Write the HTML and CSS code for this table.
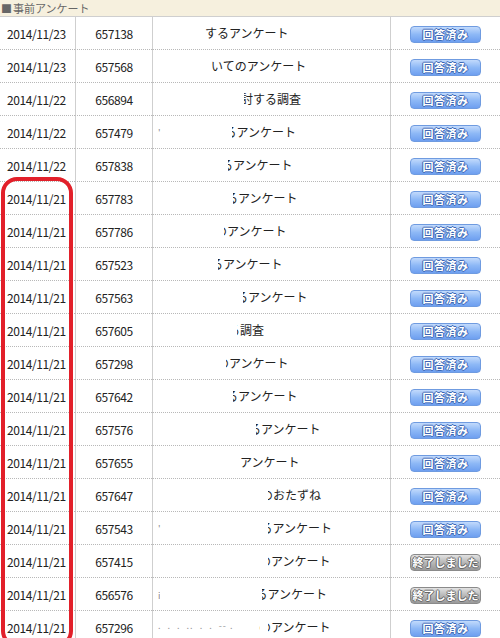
FILE: index.html
```html
<!DOCTYPE html>
<html lang="ja">
<head>
    <meta charset="UTF-8">
    <title>事前アンケート</title>
    <link rel="stylesheet" href="styles.css">
</head>
<body>

    <!-- 見出し -->
    <div class="head"><span class="sq">■</span>事前アンケート</div>

    <div class="list-wrap">
        <table class="list">
            <colgroup>
                <col class="c-date">
                <col class="c-no">
                <col class="c-title">
                <col class="c-btn">
            </colgroup>
            <tr><td class="date">2014/11/23</td><td class="no">657138</td><td class="title"><span class="erase" style="width:47px"></span>するアンケート</td><td class="act"><span class="btn">回答済み</span></td></tr>
            <tr><td class="date">2014/11/23</td><td class="no">657568</td><td class="title"><span class="erase" style="width:53px"></span>いてのアンケート</td><td class="act"><span class="btn">回答済み</span></td></tr>
            <tr><td class="date">2014/11/22</td><td class="no">656894</td><td class="title"><span class="erase over slim" style="width:86px"></span>討する調査</td><td class="act"><span class="btn">回答済み</span></td></tr>
            <tr><td class="date">2014/11/22</td><td class="no">657479</td><td class="title"><span class="speck">'</span><span class="erase over" style="width:71px"></span>るアンケート</td><td class="act"><span class="btn">回答済み</span></td></tr>
            <tr><td class="date">2014/11/22</td><td class="no">657838</td><td class="title"><span class="erase over" style="width:70px"></span>るアンケート</td><td class="act"><span class="btn">回答済み</span></td></tr>
            <tr><td class="date">2014/11/21</td><td class="no">657783</td><td class="title"><span class="erase over" style="width:75px"></span>るアンケート</td><td class="act"><span class="btn">回答済み</span></td></tr>
            <tr><td class="date">2014/11/21</td><td class="no">657786</td><td class="title"><span class="erase over thin" style="width:66px"></span>のアンケート</td><td class="act"><span class="btn">回答済み</span></td></tr>
            <tr><td class="date">2014/11/21</td><td class="no">657523</td><td class="title"><span class="erase over" style="width:60px"></span>るアンケート</td><td class="act"><span class="btn">回答済み</span></td></tr>
            <tr><td class="date">2014/11/21</td><td class="no">657563</td><td class="title"><span class="erase over" style="width:85px"></span>るアンケート</td><td class="act"><span class="btn">回答済み</span></td></tr>
            <tr><td class="date">2014/11/21</td><td class="no">657605</td><td class="title"><span class="erase over thin" style="width:79px"></span>る調査</td><td class="act"><span class="btn">回答済み</span></td></tr>
            <tr><td class="date">2014/11/21</td><td class="no">657298</td><td class="title"><span class="erase over thin" style="width:68px"></span>のアンケート</td><td class="act"><span class="btn">回答済み</span></td></tr>
            <tr><td class="date">2014/11/21</td><td class="no">657642</td><td class="title"><span class="erase over" style="width:75px"></span>るアンケート</td><td class="act"><span class="btn">回答済み</span></td></tr>
            <tr><td class="date">2014/11/21</td><td class="no">657576</td><td class="title"><span class="erase over" style="width:98px"></span>るアンケート</td><td class="act"><span class="btn">回答済み</span></td></tr>
            <tr><td class="date">2014/11/21</td><td class="no">657655</td><td class="title"><span class="erase" style="width:82px"></span>アンケート</td><td class="act"><span class="btn">回答済み</span></td></tr>
            <tr><td class="date">2014/11/21</td><td class="no">657647</td><td class="title"><span class="erase over" style="width:110px"></span>のおたずね</td><td class="act"><span class="btn">回答済み</span></td></tr>
            <tr><td class="date">2014/11/21</td><td class="no">657543</td><td class="title"><span class="speck">'</span><span class="erase over" style="width:107px"></span>るアンケート</td><td class="act"><span class="btn">回答済み</span></td></tr>
            <tr><td class="date">2014/11/21</td><td class="no">657415</td><td class="title"><span class="erase over thin" style="width:110px"></span>のアンケート</td><td class="act"><span class="btn done">終了しました</span></td></tr>
            <tr><td class="date">2014/11/21</td><td class="no">656576</td><td class="title"><span class="speck">i</span><span class="erase over" style="width:102px"></span>るアンケート</td><td class="act"><span class="btn done">終了しました</span></td></tr>
            <tr><td class="date">2014/11/21</td><td class="no">657296</td><td class="title"><span class="speck dots">.&nbsp; .&nbsp; .&nbsp; ..&nbsp; .&nbsp; .&nbsp; --&nbsp;.</span><span class="erase over thin" style="width:8px"></span>のアンケート</td><td class="act"><span class="btn">回答済み</span></td></tr>
        </table>

        <!-- 赤枠の注釈 -->
        <div class="mark"></div>
    </div>

</body>
</html>
```

FILE: styles.css
```css
body {
    margin: 0;
    padding: 0;
    background: #fff;
    font-family: "Noto Sans CJK JP", "Liberation Sans", sans-serif;
    font-size: 12px;
    color: #222;
    overflow: hidden;
}

/* 見出し */
.head {
    height: 16px;
    line-height: 16px;
    background: #f6f0de;
    border-bottom: 1px solid #cfcfcf;
    color: #666;
    font-size: 11px;
    padding-left: 1px;
}

.head .sq {
    color: #666;
    margin-right: 1px;
}

.list-wrap {
    position: relative;
}

/* 一覧 */
.list {
    width: 500px;
    table-layout: fixed;
    border-collapse: separate;
    border-spacing: 0;
}

.c-date { width: 75px; }
.c-no { width: 77px; }
.c-title { width: 238px; }
.c-btn { width: 110px; }

.list td {
    height: 32px;
    padding: 0;
    border-bottom: 1px dotted #b8b8b8;
    white-space: nowrap;
    overflow: hidden;
    vertical-align: middle;
}

.list td + td {
    border-left: 1px solid #cfcfcf;
}

.date {
    padding-left: 7px !important;
    letter-spacing: -0.4px;
}

.no {
    text-align: center;
    letter-spacing: -0.4px;
}

.title {
    padding-left: 5px !important;
}

/* 塗りつぶされた部分（白い塗りが文字の左側に重なる） */
.erase {
    display: inline-block;
    height: 16px;
    background: #fff;
    position: relative;
    z-index: 1;
    vertical-align: middle;
}

.erase.over {
    margin-right: -7px;
}

.erase.over.thin {
    margin-right: -9px;
}

.erase.over.slim {
    margin-right: -3px;
}

.speck {
    color: #888;
    font-size: 9px;
}

.speck.dots {
    display: inline-block;
    width: 102px;
    overflow: hidden;
    letter-spacing: 1px;
    color: #999;
}

.act {
    text-align: center;
}

/* ボタン */
.btn {
    display: inline-block;
    width: 69px;
    height: 15px;
    line-height: 15px;
    border: 1px solid #6f9be0;
    border-radius: 4px;
    background: linear-gradient(#c2dafc, #8db8f6 50%, #6e9ff0);
    color: #fff;
    font-size: 11px;
    font-weight: bold;
    letter-spacing: 0.5px;
    text-shadow: 1px 0 #3d67b4, -1px 0 #3d67b4, 0 1px #3d67b4, 0 -1px #3d67b4;
    vertical-align: middle;
}

.btn.done {
    border-color: #8a8a8a;
    background: linear-gradient(#e2e2e2, #b8b8b8 50%, #9a9a9a);
    text-shadow: 1px 0 #666, -1px 0 #666, 0 1px #666, 0 -1px #666;
    letter-spacing: 0;
}

/* 赤枠 */
.mark {
    position: absolute;
    left: 1px;
    top: 160px;
    width: 64px;
    height: 462px;
    border: 4px solid #e2202a;
    border-radius: 16px;
}
```
